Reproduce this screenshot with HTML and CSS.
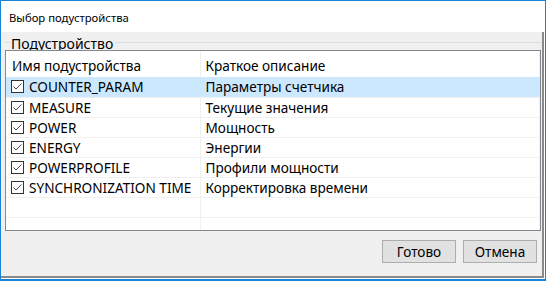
FILE: index.html
```html
<!DOCTYPE html>
<html lang="ru">
<head>
<meta charset="utf-8">
<title>Выбор подустройства</title>
<link rel="stylesheet" href="styles.css">
</head>
<body>
<div class="window">
  <div class="titlebar">Выбор подустройства</div>
  <div class="client">
    <div class="group-head"><span class="group-label">Подустройство</span></div>
    <div class="listbox">
      <table class="grid">
        <colgroup><col class="c1"><col class="c2"></colgroup>
        <thead>
          <tr><th>Имя подустройства</th><th>Краткое описание</th></tr>
        </thead>
        <tbody>
          <tr class="selected">
            <td><span class="cell"><svg class="chk" width="13" height="13" viewBox="0 0 13 13"><rect x="0.5" y="0.5" width="12" height="12" fill="#fff" stroke="#333"/><polyline points="2.5,6.5 5,9 10.5,3.5" fill="none" stroke="#444" stroke-width="1"/></svg>COUNTER_PARAM</span></td>
            <td>Параметры счетчика</td>
          </tr>
          <tr>
            <td><span class="cell"><svg class="chk" width="13" height="13" viewBox="0 0 13 13"><rect x="0.5" y="0.5" width="12" height="12" fill="#fff" stroke="#333"/><polyline points="2.5,6.5 5,9 10.5,3.5" fill="none" stroke="#444" stroke-width="1"/></svg>MEASURE</span></td>
            <td>Текущие значения</td>
          </tr>
          <tr>
            <td><span class="cell"><svg class="chk" width="13" height="13" viewBox="0 0 13 13"><rect x="0.5" y="0.5" width="12" height="12" fill="#fff" stroke="#333"/><polyline points="2.5,6.5 5,9 10.5,3.5" fill="none" stroke="#444" stroke-width="1"/></svg>POWER</span></td>
            <td>Мощность</td>
          </tr>
          <tr>
            <td><span class="cell"><svg class="chk" width="13" height="13" viewBox="0 0 13 13"><rect x="0.5" y="0.5" width="12" height="12" fill="#fff" stroke="#333"/><polyline points="2.5,6.5 5,9 10.5,3.5" fill="none" stroke="#444" stroke-width="1"/></svg>ENERGY</span></td>
            <td>Энергии</td>
          </tr>
          <tr>
            <td><span class="cell"><svg class="chk" width="13" height="13" viewBox="0 0 13 13"><rect x="0.5" y="0.5" width="12" height="12" fill="#fff" stroke="#333"/><polyline points="2.5,6.5 5,9 10.5,3.5" fill="none" stroke="#444" stroke-width="1"/></svg>POWERPROFILE</span></td>
            <td>Профили мощности</td>
          </tr>
          <tr>
            <td><span class="cell"><svg class="chk" width="13" height="13" viewBox="0 0 13 13"><rect x="0.5" y="0.5" width="12" height="12" fill="#fff" stroke="#333"/><polyline points="2.5,6.5 5,9 10.5,3.5" fill="none" stroke="#444" stroke-width="1"/></svg>SYNCHRONIZATION TIME</span></td>
            <td>Корректировка времени</td>
          </tr>
          <tr class="empty"><td></td><td></td></tr>
          <tr class="empty"><td></td><td></td></tr>
        </tbody>
      </table>
    </div>
    <div class="buttons">
      <button class="btn">Готово</button>
      <button class="btn">Отмена</button>
    </div>
  </div>
</div>
</body>
</html>
```
FILE: styles.css
```css
html, body {
  margin: 0;
  padding: 0;
  background: #ffffff;
}
body {
  font-family: "Noto Sans", "Open Sans", sans-serif;
  color: #000;
}
.window {
  width: 546px;
  height: 281px;
  box-sizing: border-box;
  border: 1px solid #1883d7;
  border-bottom-width: 2px;
  background: #ffffff;
  display: flex;
  flex-direction: column;
}
.titlebar {
  height: 31px;
  flex: none;
  display: flex;
  align-items: center;
  padding-left: 8px;
  font-size: 11.3px;
  padding-top: 1px;
  box-sizing: border-box;
}
.client {
  flex: 1;
  background: #f0f0f0;
  border-right: 2px solid #8a8a8a;
  border-bottom: 2px solid #8a8a8a;
  margin: 0 1px 1px 0;
  display: flex;
  flex-direction: column;
}
.group-head {
  margin: 2px 0 0 4px;
  height: 16px;
  display: flex;
  align-items: center;
  font-size: 14px;
}
.group-head::before {
  content: "";
  width: 5px;
  height: 1px;
  background: #dcdcdc;
}
.group-head::after {
  content: "";
  flex: 1;
  height: 1px;
  background: #dcdcdc;
}
.group-label {
  padding: 2px 2px 0 1px;
}
.listbox {
  margin: 0 1px 0 4px;
  height: 181px;
  box-sizing: border-box;
  border: 1px solid #828790;
  background: #fff;
  overflow: hidden;
}
.grid {
  border-collapse: collapse;
  table-layout: fixed;
  width: 533px;
  font-size: 13.6px;
}
.c1 { width: 194px; }
.c2 { width: 339px; }
.grid th {
  height: 26px;
  padding: 2px 0 0 6px;
  box-sizing: border-box;
  text-align: left;
  font-weight: normal;
  border-right: 1px solid #f0f0f0;
}
.grid th + th { padding-left: 5px; }
.grid td {
  height: 20px;
  box-sizing: border-box;
  padding: 0 0 0 5px;
  border-right: 1px solid #f0f0f0;
  border-bottom: 1px solid #f0f0f0;
  white-space: nowrap;
  overflow: hidden;
  vertical-align: middle;
}
.grid .selected td {
  background: #cce8ff;
  border-right-color: #cce8ff;
}
.cell {
  display: flex;
  align-items: center;
  gap: 5px;
}
.chk {
  flex: none;
  display: block;
}
.buttons {
  margin-top: 9px;
  display: flex;
  justify-content: flex-end;
  gap: 7px;
  padding-right: 5px;
}
.btn {
  width: 74px;
  height: 23px;
  box-sizing: border-box;
  background: #e1e1e1;
  border: 1px solid #adadad;
  font-family: "Noto Sans", "Open Sans", sans-serif;
  font-size: 13.6px;
  color: #000;
  padding: 0;
}
```
